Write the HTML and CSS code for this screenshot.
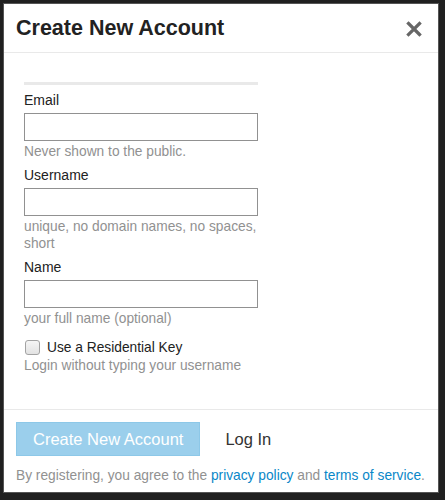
FILE: index.html
```html
<!DOCTYPE html>
<html lang="en">
<head>
    <meta charset="UTF-8">
    <meta name="viewport" content="width=device-width, initial-scale=1.0">
    <title>Create New Account</title>
    <link rel="stylesheet" href="styles.css">
</head>
<body>
    <div class="modal">
        <div class="modal-header">
            <h3>Create New Account</h3>
            <button class="modal-close" aria-label="close">
                <svg width="16" height="16" viewBox="0 0 16 16">
                    <path d="M2.5 2.5 L13.5 13.5 M13.5 2.5 L2.5 13.5" stroke="#666" stroke-width="3.2" stroke-linecap="square"/>
                </svg>
            </button>
        </div>

        <div class="modal-body">
            <div class="form">
                <div class="strength-bar"></div>

                <div class="field">
                    <label for="email">Email</label>
                    <input type="text" id="email">
                    <div class="instructions">Never shown to the public.</div>
                </div>

                <div class="field">
                    <label for="username">Username</label>
                    <input type="text" id="username">
                    <div class="instructions">unique, no domain names, no spaces, short</div>
                </div>

                <div class="field">
                    <label for="name">Name</label>
                    <input type="text" id="name">
                    <div class="instructions">your full name (optional)</div>
                </div>

                <div class="checkbox-field">
                    <label class="checkbox-label">
                        <input type="checkbox" class="checkbox">
                        <span>Use a Residential Key</span>
                    </label>
                    <div class="instructions">Login without typing your username</div>
                </div>
            </div>
        </div>

        <div class="modal-footer">
            <div class="footer-buttons">
                <button class="btn btn-primary" disabled>Create New Account</button>
                <button class="btn btn-flat">Log In</button>
            </div>
            <p class="disclaimer">By registering, you agree to the <a href="#">privacy policy</a> and <a href="#">terms of service</a>.</p>
        </div>
    </div>
</body>
</html>
```

FILE: styles.css
```css
html, body {
    margin: 0;
    height: 100%;
}

body {
    background-color: #202020;
    padding: 3px 6px 7px 3px;
    box-sizing: border-box;
    font-family: "Liberation Sans", Arial, sans-serif;
    color: #222;
}

.modal {
    background-color: #fff;
    height: 100%;
    border: 1px solid #555;
    box-sizing: border-box;
    display: flex;
    flex-direction: column;
}

.modal-header {
    display: flex;
    align-items: center;
    justify-content: space-between;
    height: 48px;
    padding: 0 16px 0 12px;
    border-bottom: 1px solid #e9e9e9;
}

.modal-header h3 {
    margin: 0;
    font-size: 21.5px;
    font-weight: bold;
    color: #222;
    padding-top: 1px;
}

.modal-close {
    background: none;
    border: none;
    padding: 0;
    cursor: pointer;
    display: flex;
    margin-top: 1px;
}

.modal-body {
    flex: 1;
    padding: 29px 20px 0 20px;
}

.form {
    width: 234px;
}

.strength-bar {
    height: 3px;
    background-color: #e9e9e9;
    margin-bottom: 7px;
}

.field {
    margin-bottom: 7px;
}

.field label {
    display: block;
    font-size: 14px;
    line-height: 17px;
    color: #222;
    margin-bottom: 4px;
}

.field input[type="text"] {
    display: block;
    width: 100%;
    height: 28px;
    box-sizing: border-box;
    border: 1px solid #919191;
    margin: 0;
    padding: 4px 6px;
    font-size: 14px;
}

.instructions {
    font-size: 13.75px;
    line-height: 17px;
    color: #919191;
    margin-top: 2px;
}

.checkbox-field {
    padding-top: 5px;
}

.checkbox-field .instructions {
    margin-top: 1px;
}

.checkbox-label {
    display: flex;
    align-items: center;
    gap: 7px;
    font-size: 13.75px;
    line-height: 17px;
    color: #222;
}

.checkbox {
    appearance: none;
    -webkit-appearance: none;
    margin: 0 0 0 1px;
    width: 15px;
    height: 15px;
    border: 1px solid #a3a3a3;
    border-radius: 3px;
    background: linear-gradient(#f6f6f6, #e2e2e2);
    box-sizing: border-box;
}

.modal-footer {
    border-top: 1px solid #e9e9e9;
    padding: 12px 13px 0 12px;
    height: 83px;
    box-sizing: border-box;
}

.footer-buttons {
    display: flex;
    align-items: center;
    gap: 9px;
}

.btn {
    font-family: inherit;
    font-size: 16.5px;
    border: none;
    padding: 0 16px;
    height: 34px;
    cursor: pointer;
}

.btn-primary {
    background-color: #9bcfec;
    color: #fff;
    border: 1px solid #8dc8e8;
}

.btn-flat {
    background: none;
    color: #333;
}

.disclaimer {
    margin: 12px 0 0 0;
    font-size: 13.75px;
    white-space: nowrap;
    color: #919191;
}

.disclaimer a {
    color: #0a87c8;
    text-decoration: none;
}
```
